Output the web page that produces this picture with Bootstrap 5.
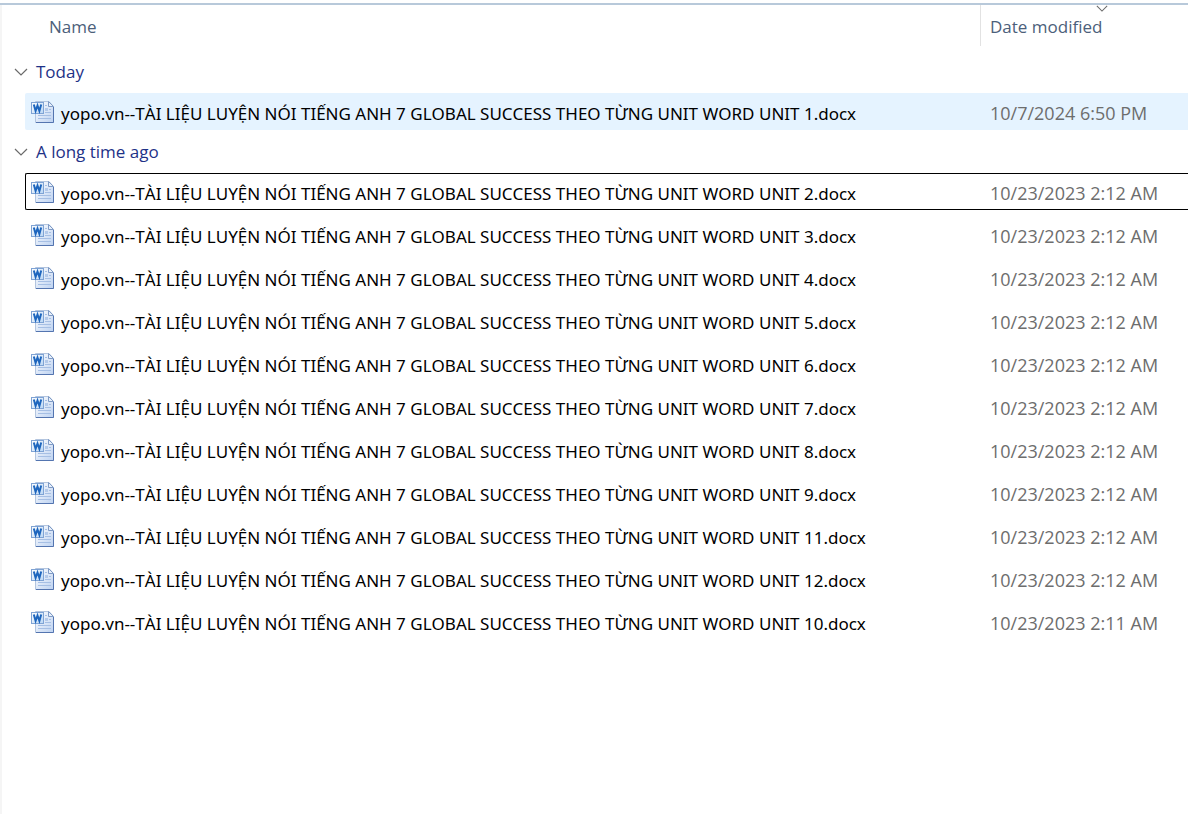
<!DOCTYPE html>
<html lang="en">
<head>
<meta charset="utf-8">
<meta name="viewport" content="width=device-width, initial-scale=1">
<title>Files</title>
<link href="https://cdn.jsdelivr.net/npm/bootstrap@5.3.0/dist/css/bootstrap.min.css" rel="stylesheet">
<style>
  body { font-family: "Open Sans", "Noto Sans", sans-serif; font-size: 17px; font-kerning: none; color: #000; background: #fff; }
  .explorer { border-top: 2px solid #b8c9da; margin-top: 3px; }
  .explorer-pane { border-left: 2px solid #f5f5f5; min-height: calc(100vh - 5px); }
  .files { table-layout: fixed; }
  .files th, .files td { padding: 0; font-weight: 400; vertical-align: top; }
  .col-date { width: 208px; }
  .head-cell { height: 41px; margin-bottom: 10px; color: #4c607a; line-height: 44px; position: relative; }
  .head-name { padding-left: 47px; }
  .head-date { border-left: 1px solid #e2e2e2; padding-left: 9px; }
  .head-btn { all: unset; cursor: pointer; }
  .sort-mark { position: absolute; top: 0; left: 115px; }
  .group-btn { all: unset; display: flex; align-items: center; gap: 8px; height: 32px; margin: 0 0 5px 12px; color: #1e3287; cursor: pointer; }
  .file-name, .file-date { height: 37px; margin-bottom: 6px; border: 0 solid transparent; border-width: 1px 0; line-height: 38px; white-space: nowrap; }
  .file-name { margin-left: 23px; padding-left: 5px; border-left-width: 1px; border-radius: 2px 0 0 2px; font-family: "Noto Sans", "Open Sans", sans-serif; line-height: 40px; gap: 6px; }
  .file-name svg { flex: none; margin-top: 6px; }
  .file-date { padding-left: 10px; color: #6d6d6d; font-size: 18px; }
  .is-hover .file-name, .is-hover .file-date { background: #e5f3ff; }
  .is-focused .file-name, .is-focused .file-date { border-color: #000; }
</style>
</head>
<body>
<svg width="0" height="0" class="position-absolute" aria-hidden="true">
  <defs>
    <linearGradient id="paper" x1="0" y1="0" x2="1" y2="1"><stop offset="0" stop-color="#fff"/><stop offset="1" stop-color="#bdd2f1"/></linearGradient>
    <linearGradient id="tile" x1="0" y1="0" x2="1" y2="1"><stop offset="0" stop-color="#fff"/><stop offset="1" stop-color="#b9d6f5"/></linearGradient>
    <symbol id="doc" viewBox="0 0 24 24">
      <path d="M4.500 1.500H18L22.500 6.500V22.500H4.500Z" fill="url(#paper)" stroke="#b3c5df"/>
      <path d="M22.500 7V22.500H5" fill="none" stroke="#5475b0"/>
      <path d="M17.500 1.500V6.500H22.500Z" fill="#e8f0fb" stroke="#7f9bc6"/>
      <path d="M14 8H17V11H14Z" fill="#b4caea"/>
      <path d="M14 5.500H16M18 9.500H20M7 15.500H20M7 18.500H20M14 12.500H20" stroke="#a6bfe4"/>
      <rect x=".5" y="2.500" width="12" height="11" fill="url(#tile)" stroke="#7fa3d4"/>
      <path d="M2.800 4.500L4.600 11L6.500 5.500L8.400 11L10.200 4.500" fill="none" stroke="#1e66be" stroke-width="2"/>
    </symbol>
    <symbol id="chevron" viewBox="0 0 14 8"><path d="M1 1L7 7L13 1" fill="none" stroke="#6a6a6a" stroke-width="1.200"/></symbol>
  </defs>
</svg>
<main class="explorer">
  <div class="explorer-pane">
    <table class="files w-100">
      <colgroup><col><col class="col-date"></colgroup>
      <thead>
        <tr>
          <th scope="col"><div class="head-cell head-name"><button class="head-btn" type="button">Name</button></div></th>
          <th scope="col" aria-sort="descending"><div class="head-cell head-date"><button class="head-btn" type="button">Date modified<svg class="sort-mark" width="12" height="7" aria-hidden="true"><use href="#chevron"/></svg></button></div></th>
        </tr>
      </thead>
      <tbody>
        <tr><th colspan="2" scope="rowgroup"><button class="group-btn" type="button" aria-expanded="true"><svg width="14" height="8" aria-hidden="true"><use href="#chevron"/></svg>Today</button></th></tr>
        <tr class="is-hover"><td><div class="file-name d-flex"><svg width="24" height="24" aria-hidden="true"><use href="#doc"/></svg><span>yopo.vn--TÀI LIỆU LUYỆN NÓI TIẾNG ANH 7 GLOBAL SUCCESS THEO TỪNG UNIT WORD UNIT 1.docx</span></div></td><td><div class="file-date">10/7/2024 6:50 PM</div></td></tr>
      </tbody>
      <tbody>
        <tr><th colspan="2" scope="rowgroup"><button class="group-btn" type="button" aria-expanded="true"><svg width="14" height="8" aria-hidden="true"><use href="#chevron"/></svg>A long time ago</button></th></tr>
        <tr class="is-focused"><td><div class="file-name d-flex"><svg width="24" height="24" aria-hidden="true"><use href="#doc"/></svg><span>yopo.vn--TÀI LIỆU LUYỆN NÓI TIẾNG ANH 7 GLOBAL SUCCESS THEO TỪNG UNIT WORD UNIT 2.docx</span></div></td><td><div class="file-date">10/23/2023 2:12 AM</div></td></tr>
        <tr><td><div class="file-name d-flex"><svg width="24" height="24" aria-hidden="true"><use href="#doc"/></svg><span>yopo.vn--TÀI LIỆU LUYỆN NÓI TIẾNG ANH 7 GLOBAL SUCCESS THEO TỪNG UNIT WORD UNIT 3.docx</span></div></td><td><div class="file-date">10/23/2023 2:12 AM</div></td></tr>
        <tr><td><div class="file-name d-flex"><svg width="24" height="24" aria-hidden="true"><use href="#doc"/></svg><span>yopo.vn--TÀI LIỆU LUYỆN NÓI TIẾNG ANH 7 GLOBAL SUCCESS THEO TỪNG UNIT WORD UNIT 4.docx</span></div></td><td><div class="file-date">10/23/2023 2:12 AM</div></td></tr>
        <tr><td><div class="file-name d-flex"><svg width="24" height="24" aria-hidden="true"><use href="#doc"/></svg><span>yopo.vn--TÀI LIỆU LUYỆN NÓI TIẾNG ANH 7 GLOBAL SUCCESS THEO TỪNG UNIT WORD UNIT 5.docx</span></div></td><td><div class="file-date">10/23/2023 2:12 AM</div></td></tr>
        <tr><td><div class="file-name d-flex"><svg width="24" height="24" aria-hidden="true"><use href="#doc"/></svg><span>yopo.vn--TÀI LIỆU LUYỆN NÓI TIẾNG ANH 7 GLOBAL SUCCESS THEO TỪNG UNIT WORD UNIT 6.docx</span></div></td><td><div class="file-date">10/23/2023 2:12 AM</div></td></tr>
        <tr><td><div class="file-name d-flex"><svg width="24" height="24" aria-hidden="true"><use href="#doc"/></svg><span>yopo.vn--TÀI LIỆU LUYỆN NÓI TIẾNG ANH 7 GLOBAL SUCCESS THEO TỪNG UNIT WORD UNIT 7.docx</span></div></td><td><div class="file-date">10/23/2023 2:12 AM</div></td></tr>
        <tr><td><div class="file-name d-flex"><svg width="24" height="24" aria-hidden="true"><use href="#doc"/></svg><span>yopo.vn--TÀI LIỆU LUYỆN NÓI TIẾNG ANH 7 GLOBAL SUCCESS THEO TỪNG UNIT WORD UNIT 8.docx</span></div></td><td><div class="file-date">10/23/2023 2:12 AM</div></td></tr>
        <tr><td><div class="file-name d-flex"><svg width="24" height="24" aria-hidden="true"><use href="#doc"/></svg><span>yopo.vn--TÀI LIỆU LUYỆN NÓI TIẾNG ANH 7 GLOBAL SUCCESS THEO TỪNG UNIT WORD UNIT 9.docx</span></div></td><td><div class="file-date">10/23/2023 2:12 AM</div></td></tr>
        <tr><td><div class="file-name d-flex"><svg width="24" height="24" aria-hidden="true"><use href="#doc"/></svg><span>yopo.vn--TÀI LIỆU LUYỆN NÓI TIẾNG ANH 7 GLOBAL SUCCESS THEO TỪNG UNIT WORD UNIT 11.docx</span></div></td><td><div class="file-date">10/23/2023 2:12 AM</div></td></tr>
        <tr><td><div class="file-name d-flex"><svg width="24" height="24" aria-hidden="true"><use href="#doc"/></svg><span>yopo.vn--TÀI LIỆU LUYỆN NÓI TIẾNG ANH 7 GLOBAL SUCCESS THEO TỪNG UNIT WORD UNIT 12.docx</span></div></td><td><div class="file-date">10/23/2023 2:12 AM</div></td></tr>
        <tr><td><div class="file-name d-flex"><svg width="24" height="24" aria-hidden="true"><use href="#doc"/></svg><span>yopo.vn--TÀI LIỆU LUYỆN NÓI TIẾNG ANH 7 GLOBAL SUCCESS THEO TỪNG UNIT WORD UNIT 10.docx</span></div></td><td><div class="file-date">10/23/2023 2:11 AM</div></td></tr>
      </tbody>
    </table>
  </div>
</main>
<script src="https://cdn.jsdelivr.net/npm/bootstrap@5.3.0/dist/js/bootstrap.bundle.min.js"></script>
</body>
</html>
